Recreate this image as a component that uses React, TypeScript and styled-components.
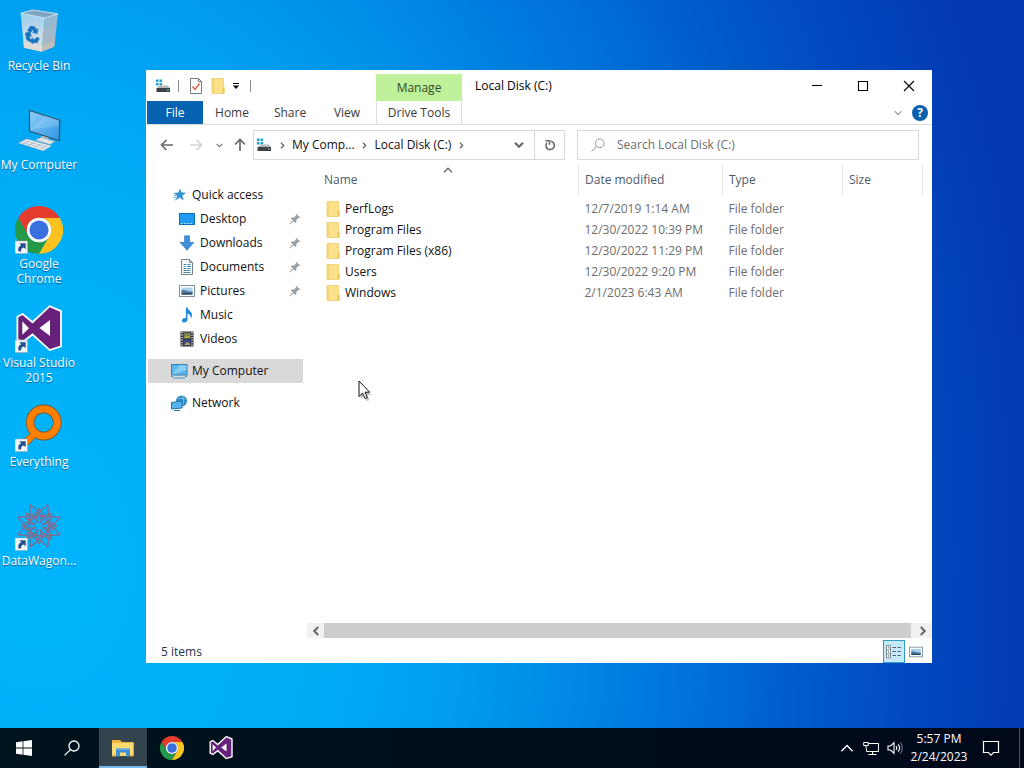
import React from "react";
import styled, { createGlobalStyle, css } from "styled-components";

const GlobalStyle = createGlobalStyle`
  *, *::before, *::after { box-sizing: border-box; }
  body {
    margin: 0;
    font-family: "Open Sans", "Noto Sans", sans-serif;
    font-size: 12px;
    line-height: 16px;
    color: #111;
  }
  button, input { font: inherit; color: inherit; }
  svg { display: block; flex: none; }
`;

const buttonReset = css`
  border: 0;
  padding: 0;
  margin: 0;
  background: none;
  display: flex;
  align-items: center;
  justify-content: center;
`;

/* ---------- Desktop ---------- */

const Screen = styled.div`
  min-height: 100vh;
  display: flex;
  flex-direction: column;
  background: radial-gradient(
    ellipse 98% 182% at 4% 73%,
    #00b5fd 0%,
    #00aef8 26%,
    #009df0 42%,
    #0091e8 49%,
    #0074dc 64%,
    #0058c8 78%,
    #0249c0 87%,
    #0238b0 100%
  );
`;

const Desktop = styled.main`
  flex: 1;
  position: relative;
  display: flex;
`;

const Shortcuts = styled.nav`
  width: 78px;
  padding: 8px 0;
  display: grid;
  grid-auto-rows: 99px;
  align-content: start;
`;

const Shortcut = styled.button`
  ${buttonReset}
  flex-direction: column;
  justify-content: flex-start;
  gap: 2px;
  color: #fff;
  line-height: 15px;
  text-shadow: 0 1px 1px rgba(0, 40, 90, 0.6);
`;

const ShortcutLabel = styled.span`
  max-width: 78px;
`;

/* ---------- Explorer window ---------- */

const Window = styled.section`
  position: absolute;
  top: 70px;
  right: 92px;
  bottom: 65px;
  left: 146px;
  padding: 0 0 0 1px;
  background: #fff;
  display: flex;
  flex-direction: column;
`;

const TitleBar = styled.header`
  height: 31px;
  display: flex;
  align-items: center;
`;

const QuickTools = styled.div`
  width: 229px;
  padding-left: 8px;
  display: flex;
  align-items: center;
`;

const ToolButton = styled.button<{ $width: number }>`
  ${buttonReset}
  width: ${(p) => p.$width}px;
  height: 22px;
`;

const Divider = styled.span`
  width: 1px;
  height: 12px;
  margin: 0 6px 0 7px;
  background: #8a8a8a;
`;

const ManageTab = styled.button`
  ${buttonReset}
  width: 86px;
  height: 27px;
  align-self: flex-end;
  background: #bff09a;
  color: #2f4a26;
`;

const Title = styled.h1`
  flex: 1;
  margin: 0 0 0 13px;
  font-size: 12px;
  font-weight: 400;
  color: #000;
`;

const CaptionButton = styled.button`
  ${buttonReset}
  width: 46px;
  height: 30px;
`;

const Ribbon = styled.div`
  height: 24px;
  display: flex;
  border-bottom: 1px solid #dcdddf;
`;

const RibbonTab = styled.button<{ $kind?: "file" | "context"; $width: number }>`
  ${buttonReset}
  width: ${(p) => p.$width}px;
  color: #3a3a3a;
  ${(p) =>
    p.$kind === "file" &&
    css`
      background: #0563b1;
      color: #fff;
    `}
  ${(p) =>
    p.$kind === "context" &&
    css`
      margin-left: 1px;
      border: solid #dcdddf;
      border-width: 0 1px;
    `}
`;

const RibbonEnd = styled.div`
  margin-left: auto;
  padding-right: 4px;
  display: flex;
  align-items: center;
  gap: 10px;
`;

const HelpButton = styled.button`
  ${buttonReset}
  width: 16px;
  height: 16px;
  border-radius: 50%;
  background: #0a62ad;
  color: #fff;
  font-weight: 700;
`;

const NavBar = styled.div`
  height: 40px;
  padding: 0 13px 0 7px;
  display: flex;
  align-items: center;
`;

const NavButton = styled.button<{ $width: number }>`
  ${buttonReset}
  width: ${(p) => p.$width}px;
  height: 28px;
`;

const AddressBar = styled.div`
  flex: 308 1 0;
  height: 30px;
  border: 1px solid #d9d9d9;
  display: flex;
  align-items: center;
  padding-left: 2px;
`;

const Crumb = styled.button`
  ${buttonReset}
  white-space: nowrap;
`;

const CrumbArrow = styled.span`
  width: 20px;
  display: flex;
  justify-content: center;
`;

const AddressEnd = styled.div`
  margin-left: auto;
  align-self: stretch;
  display: flex;
`;

const AddressButton = styled.button<{ $split?: boolean }>`
  ${buttonReset}
  width: 30px;
  border-left: ${(p) => (p.$split ? "1px solid #d9d9d9" : "0")};
`;

const SearchBox = styled.label`
  flex: 327 1 0;
  height: 30px;
  margin-left: 12px;
  padding-left: 13px;
  border: 1px solid #d9d9d9;
  display: flex;
  align-items: center;
  gap: 12px;
`;

const SearchInput = styled.input`
  flex: 1;
  min-width: 0;
  border: 0;
  padding: 0;
  outline: 0;
  background: none;
  &::placeholder { color: #6d6d6d; opacity: 1; }
`;

const Body = styled.div`
  flex: 1;
  min-height: 0;
  display: flex;
`;

const Sidebar = styled.nav`
  width: 160px;
  padding: 18px 4px 0 1px;
`;

const SideGroup = styled.ul`
  list-style: none;
  margin: 0 0 8px;
  padding: 0;
`;

const SideItem = styled.button<{ $child?: boolean; $selected?: boolean }>`
  ${buttonReset}
  justify-content: flex-start;
  width: 100%;
  height: 24px;
  padding-left: ${(p) => (p.$child ? 30 : 22)}px;
  padding-right: 2px;
  gap: 4px;
  background: ${(p) => (p.$selected ? "#d9d9d9" : "transparent")};
`;

const SideIcon = styled.span`
  width: 18px;
  display: flex;
  justify-content: center;
`;

const SideLabel = styled.span`
  flex: 1;
  text-align: left;
`;

const Content = styled.div`
  flex: 1;
  min-width: 0;
  display: flex;
  flex-direction: column;
`;

const FileArea = styled.div`
  flex: 1;
  padding-right: 9px;
`;

const FileTable = styled.table`
  width: 100%;
  table-layout: fixed;
  border-collapse: collapse;
`;

const HeadCell = styled.th<{ $width?: number }>`
  position: relative;
  width: ${(p) => (p.$width ? `${p.$width}px` : "auto")};
  height: 30px;
  padding: 0 0 0 ${(p) => (p.$width ? 6 : 17)}px;
  border-right: 1px solid #e5e5e5;
  text-align: left;
  font-weight: 400;
  color: #4c5a6c;
`;

const SortMark = styled.span`
  position: absolute;
  top: 0;
  left: 50%;
`;

const FileRows = styled.tbody`
  &::before {
    content: "";
    display: block;
    height: 3px;
  }
`;

const Cell = styled.td`
  height: 21px;
  padding: 0 0 0 6px;
  color: #6d6d6d;
  white-space: nowrap;
`;

const FileName = styled.span`
  padding-left: 13px;
  display: flex;
  align-items: center;
  gap: 4px;
  color: #111;
`;

const ScrollBar = styled.div`
  height: 15px;
  margin-bottom: 2px;
  padding-right: 1px;
  display: flex;
  background: #f1f1f1;
`;

const ScrollButton = styled.button`
  ${buttonReset}
  width: 17px;
`;

const ScrollThumb = styled.div`
  flex: 1;
  margin-right: 3px;
  background: #cdcdcd;
`;

const StatusBar = styled.footer`
  height: 23px;
  padding: 0 5px 0 14px;
  display: flex;
  align-items: center;
  color: #24344d;
`;

const ViewButton = styled.button<{ $active?: boolean; $first?: boolean }>`
  ${buttonReset}
  width: 22px;
  height: 23px;
  margin-left: ${(p) => (p.$first ? "auto" : "0")};
  border: ${(p) => (p.$active ? "1px solid #2f9fc4" : "0")};
  background: ${(p) => (p.$active ? "#c5e9f7" : "transparent")};
`;

const Cursor = styled.div`
  position: absolute;
  top: 380px;
  left: 358px;
  pointer-events: none;
`;

/* ---------- Taskbar ---------- */

const Taskbar = styled.footer`
  height: 40px;
  display: flex;
  background: linear-gradient(90deg, #00141d, #000d1c 60%, #00081a);
  color: #fff;
`;

const TaskGroup = styled.div<{ $gap: number }>`
  display: flex;
  gap: ${(p) => p.$gap}px;
  margin-right: 3px;
`;

const TaskButton = styled.button<{ $active?: boolean }>`
  ${buttonReset}
  width: 48px;
  height: 40px;
  background: ${(p) => (p.$active ? "#33444f" : "transparent")};
  box-shadow: ${(p) => (p.$active ? "inset 0 -2px #76b9ed" : "none")};
`;

const Tray = styled.div`
  margin-left: auto;
  display: flex;
`;

const TrayButton = styled.button<{ $width: number }>`
  ${buttonReset}
  width: ${(p) => p.$width}px;
`;

const Clock = styled.time`
  width: 64px;
  padding-top: 2px;
  text-align: center;
  line-height: 18px;
  display: flex;
  flex-direction: column;
`;

const ShowDesktop = styled.button`
  ${buttonReset}
  width: 5px;
  margin-left: 8px;
  border-left: 1px solid #4a5564;
`;

/* ---------- Drawings ---------- */

const ShortcutArrow = () => (
  <g>
    <rect x="0" y="35" width="12.500" height="12.500" fill="#f4f6f8" stroke="#9aa7b5" strokeWidth=".6" />
    <path d="M3.500 45.500c-.8-3 .2-5.300 2.600-6.200L4.500 37.300h6.200v6l-1.900-1.900c-2.200.4-3 1.900-2.600 4.100z" fill="#23508f" />
  </g>
);

const RecycleBinIcon = () => (
  <svg width="48" height="48" viewBox="0 0 48 48">
    <defs>
      <linearGradient id="binL" x1="0" x2="0" y1="0" y2="1">
        <stop offset="0" stopColor="#9fcfee" /><stop offset=".6" stopColor="#c9dbe6" /><stop offset="1" stopColor="#dedbd8" />
      </linearGradient>
      <linearGradient id="binR" x1="0" x2="0" y1="0" y2="1">
        <stop offset="0" stopColor="#8fb9d6" /><stop offset="1" stopColor="#b3b7ba" />
      </linearGradient>
    </defs>
    <path d="M5.700 5.300 30 10l-3.300 33.700L9 39.700z" fill="url(#binL)" />
    <path d="M30 10 43 5.800l-3.700 33-12.600 4.900z" fill="url(#binR)" />
    <path d="M5.700 5.300 17.700 2 43 5.800 30 10z" fill="#7fa6be" stroke="#d3e6f1" strokeWidth=".9" />
    <path d="m9 39.700-.8-6.500 19.200 4.500-.7 6z" fill="#e3dcd4" opacity=".7" />
    <path d="m27.400 37.700 12.400-4.500-.5 5.600-12.600 4.900z" fill="#c9bfb5" opacity=".7" />
    <g fill="#1673c4" stroke="#1673c4" strokeWidth=".6">
      <path d="m12.500 22.500 3-4.500 4 .8 2 2.800 1.400-.8-.9 5-4.400-1.600 1.400-.8-1.400-1.800-2.200 3.300z" />
      <path d="m10.500 25 4-.8 2 4-1.500-.5-.6 1.800 1.400 2.800-1.500 1.500-2.800-2.500z" />
      <path d="m17.600 31 2.600.6 1.200-2.300 2.900 1-2 4.200-4.700.3v1.200l-3-3.300 3-2.800z" />
    </g>
  </svg>
);

const ComputerIcon = () => (
  <svg width="48" height="48" viewBox="0 0 48 48">
    <defs>
      <linearGradient id="scr" x1="0" y1="0" x2="1" y2="1">
        <stop offset="0" stopColor="#8fd0f8" /><stop offset=".5" stopColor="#5cb2ee" /><stop offset="1" stopColor="#2f96e4" />
      </linearGradient>
    </defs>
    <path d="m27 28 7 2-1 4-8-2z" fill="#b9c2c8" />
    <path d="m20 33 6-2.500 14 4-5 3z" fill="#dfe4e8" stroke="#8fa3b0" strokeWidth=".5" />
    <path d="m14.500 3.500 30.300 9.800-.5 20.500L14.500 24z" fill="url(#scr)" stroke="#33556e" strokeWidth="1.200" />
    <path d="m15.500 22.500 15-14 13 4.500v6z" fill="#fff" opacity=".15" />
    <path d="m3.300 36 8.400-4.200 25 6.900-8.400 5.300z" fill="#e6ecf0" stroke="#7d98ab" strokeWidth=".5" />
    <path d="m7 35.500 22.500 6M10 34l22.500 6M14 33.500 7.500 37M20 35l-7 3.800M26 36.800l-6.500 4M32 38.500l-6 3.500" stroke="#9db0bd" strokeWidth=".6" fill="none" />
  </svg>
);

const ChromeShape = () => (
  <g>
    <path d="M3.200 12A24 24 0 0 1 44.800 12H24A12 12 0 0 0 13.600 30z" fill="#e33b2e" />
    <path d="M3.200 12 13.600 30a12 12 0 0 0 20.800 0L24 48A24 24 0 0 1 3.200 12z" fill="#249a48" />
    <path d="M44.800 12A24 24 0 0 1 24 48l10.400-18A12 12 0 0 0 24 12z" fill="#fcc31e" />
    <circle cx="24" cy="24" r="12.200" fill="#fff" />
    <circle cx="24" cy="24" r="9.600" fill="#3a6fe0" />
  </g>
);

const ChromeIcon = ({ size, linked }: { size: number; linked?: boolean }) => (
  <svg width={size} height={size} viewBox="0 0 48 48">
    <ChromeShape />
    {linked && <ShortcutArrow />}
  </svg>
);

const StudioIcon = ({ size, linked }: { size: number; linked?: boolean }) => (
  <svg width={size} height={size} viewBox="0 0 48 48">
    <path
      d="M2.400 11.700 7.700 9l9.800 8.200L34.700 1.200l11.300 4.900v35.200l-11.300 3.800L17.500 29.500 7.700 37l-5.300-2.700z"
      fill="#68217a"
      stroke="#fff"
      strokeWidth={linked ? 1.8 : 2.8}
    />
    <path d="M7.300 16.300v13.500l6.700-6.600zM35 15v16l-10.500-8z" fill="#fff" />
    {linked && <ShortcutArrow />}
  </svg>
);

const EverythingIcon = () => (
  <svg width="48" height="48" viewBox="0 0 48 48">
    <path d="m16 29-9 8 4 6 9.500-9.500z" fill="#ff8000" stroke="#7b5a34" />
    <circle cx="28.700" cy="18.500" r="13.600" fill="none" stroke="#7b5a34" strokeWidth="8.600" />
    <circle cx="28.700" cy="18.500" r="13.600" fill="none" stroke="#ff8000" strokeWidth="6.800" />
    <path d="m17 28.500-5 4.500 4 4 5.500-5z" fill="#ff8000" />
    <ShortcutArrow />
  </svg>
);

const WagonIcon = () => (
  <svg width="48" height="48" viewBox="0 0 48 48">
    <g fill="none" strokeWidth="1">
      {[0, 45, 90, 135].map((a) => (
        <g key={a} transform={`rotate(${a} 24 23)`}>
          <path d="M15 2v16L24 11l9 7V2l-9 7zM15 44V28l9 7 9-7v16l-9-7z" stroke="#7c6c98" />
          <path d="m24 5 5 10-5 6-5-6zM24 41l5-10-5-6-5 6z" stroke="#a8606c" />
          <path d="M17 10 31 36M31 10 17 36" stroke="#6d74a2" />
        </g>
      ))}
    </g>
    <circle cx="24" cy="23" r="3.500" fill="#08b4f6" />
    <ShortcutArrow />
  </svg>
);

const DriveIcon = () => (
  <svg width="16" height="16" viewBox="0 0 16 16">
    <path d="M1 1.500h2.500V4H1zM4.500 1.500H7V4H4.500zM1 5h2.500v2.500H1zM4.500 5H7v2.500H4.500z" fill="#18a4d8" />
    <path d="m3.500 8.500 1-1h8.500l2 2.500h-13z" fill="#b6babd" />
    <path d="M1.500 10h13.500v4h-13.500z" fill="#3d4246" />
    <path d="M12 12h2" stroke="#57d08a" />
  </svg>
);

const PropertiesIcon = () => (
  <svg width="14" height="16" viewBox="0 0 14 16">
    <path d="M1.500.5h8l3 3v12h-11z" fill="#fbfbfb" stroke="#7c7c7c" />
    <path d="M9.500.5v3h3" fill="none" stroke="#7c7c7c" />
    <path d="m3.500 8.500 2.500 3 4.500-6" fill="none" stroke="#dc5a40" strokeWidth="1.300" />
  </svg>
);

const FolderIcon = () => (
  <svg width="15" height="16" viewBox="0 0 15 16">
    <path d="M1 .5h11.500v15H1z" fill="#fbe28a" stroke="#edcd68" strokeWidth=".8" />
    <path d="M1 .5h2v15H1z" fill="#f3d372" />
    <path d="m11.500 10 2.200-1v6.500h-2.200z" fill="#ecc95a" />
  </svg>
);

const Chevron = ({ dir, color = "#666", size = 8, weight = 1.4 }: { dir: "up" | "down" | "left" | "right"; color?: string; size?: number; weight?: number }) => {
  const turn = { down: 0, left: 90, up: 180, right: 270 }[dir];
  return (
    <svg width={size} height={size} viewBox="0 0 8 8">
      <path d="m.8 2.200 3.200 3.200 3.200-3.200" transform={`rotate(${turn} 4 4)`} fill="none" stroke={color} strokeWidth={weight} />
    </svg>
  );
};

const Arrow = ({ turn = 0, color = "#6a6a6a" }: { turn?: number; color?: string }) => (
  <svg width="14" height="14" viewBox="0 0 14 14">
    <path d="M13 7H2M6.500 2 1.500 7l5 5" transform={`rotate(${turn} 7 7)`} fill="none" stroke={color} strokeWidth="1.700" />
  </svg>
);

const Magnifier = ({ size, color, weight }: { size: number; color: string; weight: number }) => (
  <svg width={size} height={size} viewBox="0 0 16 16">
    <circle cx="10" cy="6" r="5" fill="none" stroke={color} strokeWidth={weight} />
    <path d="M6.400 9.600.6 15.400" stroke={color} strokeWidth={weight} />
  </svg>
);

const PinIcon = () => (
  <svg width="12" height="12" viewBox="0 0 12 12">
    <path d="m7.200.8 4 4-1 .4-.9-.2-2 2 .1 2.200-1 .9L4.600 8.200 1 11.400l-.5-.5 3.200-3.600L1.900 5.500l.9-1 2.200.1 2-2-.2-.9z" fill="#9aa0a5" />
  </svg>
);

const StarIcon = () => (
  <svg width="14" height="14" viewBox="0 0 16 16">
    <path d="m9.200 1.500 1.300 4 4.700.2-3.700 2.800 1.300 5-4-2.800-3.800 2.400 1.200-4.400L2.600 6l4.600-.4z" fill="#2f96d8" stroke="#1f78b8" strokeWidth=".6" />
    <path d="M2 8.500h3M1.500 11h3M3 13.500h2" stroke="#4aa9e4" />
  </svg>
);

const DesktopIcon = () => (
  <svg width="16" height="16" viewBox="0 0 16 16">
    <rect x=".5" y="2.500" width="15" height="11" fill="#1e9bf0" stroke="#0e6fb8" />
    <path d="M2 12.500h12" stroke="#9ad6fb" strokeDasharray="2 1" />
  </svg>
);

const DownloadIcon = () => (
  <svg width="16" height="16" viewBox="0 0 16 16">
    <path d="M5.500.8h5v6.500H15L8 15.300 1 7.300h4.500z" fill="#3c8fd8" stroke="#2a74b8" strokeWidth=".6" />
  </svg>
);

const DocumentIcon = () => (
  <svg width="16" height="16" viewBox="0 0 16 16">
    <path d="M2.500.5h8l3 3v12h-11z" fill="#fcfdfe" stroke="#75848f" />
    <path d="M10.500.5v3h3" fill="none" stroke="#75848f" />
    <path d="M4.500 5.500h3M8.500 5.500h3M4.500 7.500h2M8 7.500h4M4.500 9.500h3M8.500 9.500h3M4.500 11.500h7M4.500 13.500h7" stroke="#3f88a8" />
  </svg>
);

const PictureIcon = ({ size = 16 }: { size?: number }) => (
  <svg width={size} height={size} viewBox="0 0 16 16">
    <rect x=".5" y="2.500" width="15" height="11" fill="#fff" stroke="#7d93a5" />
    <path d="M2.500 4.500h11v7h-11z" fill="#a9d1ee" />
    <path d="M2.500 7.500c3-1.500 5 1.500 11 1v3h-11z" fill="#4a7ca3" />
    <path d="M2.500 10.500c3-1 6-.5 11 0v1h-11z" fill="#23415a" />
  </svg>
);

const MusicIcon = () => (
  <svg width="16" height="16" viewBox="0 0 16 16">
    <path d="M7 .5h1.500c.3 3 4.500 4 4.500 7.500 0 1.500-.6 2.600-1.500 3.500.5-2.500-.5-4.500-3-5v6c0 2-1.500 3-3.200 3C3.800 15.500 3 14.500 3 13.400c0-1.600 1.800-2.700 4-2.300z" fill="#1b8be0" />
  </svg>
);

const VideoIcon = () => (
  <svg width="16" height="16" viewBox="0 0 16 16">
    <rect x="1.500" y=".5" width="13" height="15" fill="#2c2c2e" />
    <path d="M3 1v14M13 1v14" stroke="#e8e8e8" strokeWidth="1.400" strokeDasharray="1.200 1.300" />
    <rect x="4.500" y="1.500" width="7" height="6" fill="#6f7d52" />
    <rect x="4.500" y="8.500" width="7" height="6" fill="#3d4c8c" />
    <path d="m5 7 2-3 2 2 2-3v4zM5 14l3-3 3 2v1z" fill="#b9a64a" />
  </svg>
);

const MonitorIcon = () => (
  <svg width="18" height="16" viewBox="0 0 18 16">
    <rect x="1.500" y="1.500" width="15.500" height="10.500" fill="#5cb6ec" stroke="#2e7fb4" />
    <path d="m2 11.500 8-9.500h6.500v5z" fill="#9ad8fa" opacity=".7" />
    <path d="M3 15h12M1 13.500h2M15 13.500h2" stroke="#4b97c4" />
  </svg>
);

const NetworkPlaceIcon = () => (
  <svg width="18" height="16" viewBox="0 0 18 16">
    <circle cx="11.500" cy="6" r="5.500" fill="#2e8cc8" />
    <path d="M8 3c2 1 5 0 7 1M12 .5c2 3 2 7 0 11" stroke="#8accf0" fill="none" strokeWidth=".8" />
    <path d="m1.500 7.500 10.500-1.500v7l-10.500 1z" fill="#56b4ea" stroke="#2473a6" />
    <path d="M4 15.500h6" stroke="#2473a6" />
  </svg>
);

const RefreshIcon = () => (
  <svg width="12" height="12" viewBox="0 0 12 12">
    <path d="M6.800 2.300A4.200 4.200 0 1 1 2.900 3.800" fill="none" stroke="#6b6b6b" strokeWidth="1.600" />
    <path d="M1.500 1.800h4v4" fill="none" stroke="#6b6b6b" strokeWidth="1.600" />
  </svg>
);

const CaretMenuIcon = () => (
  <svg width="8" height="8" viewBox="0 0 8 8">
    <path d="M1 1.500h6" stroke="#000" />
    <path d="M.8 3.500h6.400L4 7z" fill="#000" />
  </svg>
);

const DetailsIcon = () => (
  <svg width="16" height="14" viewBox="0 0 16 14">
    <path d="M.5.500h4v12.500h-4zM.5 4.700h4M.5 8.900h4" fill="#fff" stroke="#7f8c96" />
    <path d="M2 2.700h1M2 6.800h1M2 11h1" stroke="#333" />
    <path d="M6.500 2.500h3.500M11.500 2.500H15M6.500 6.500h3.500M11.500 6.500H15M6.500 10.500h3.500M11.500 10.500H15" stroke="#56646f" />
  </svg>
);

const WindowsIcon = () => (
  <svg width="16" height="16" viewBox="0 0 16 16">
    <path d="M0 2.200 6.600 1.300v6.300H0zM7.400 1.200 16 0v7.600H7.400zM0 8.400h6.600v6.300L0 13.800zM7.400 8.400H16V16l-8.600-1.200z" fill="#fff" />
  </svg>
);

const ExplorerIcon = () => (
  <svg width="22" height="18" viewBox="0 0 22 18">
    <path d="M0 1h8l2 2h11.500v14H0z" fill="#f0b73c" />
    <path d="M0 4h21.500v13H0z" fill="#fddb70" />
    <path d="M4 9.500h14V17.500h-4v-4H8v4H4z" fill="#3f8fd2" />
    <path d="M4 9.500h14v1.500H4z" fill="#66b0e8" />
    <path d="M0 16h4v1.500H0zM18 16h3.500v1.500H18z" fill="#e9ae36" />
  </svg>
);

const TrayNetworkIcon = () => (
  <svg width="17" height="15" viewBox="0 0 17 15">
    <path d="M5.300 2.500h10.200v8H3.500V7.500M9.500 10.500v3M5.500 13.500h8" fill="none" stroke="#fff" />
    <path d="M.7 1.500h4.600v3H.7zM3 4.500V7.500" fill="none" stroke="#fff" />
  </svg>
);

const SpeakerIcon = () => (
  <svg width="17" height="14" viewBox="0 0 17 14">
    <path d="M1 5h2.500L7 1.800v10.400L3.500 9H1z" fill="none" stroke="#fff" strokeWidth="1.100" />
    <path d="M9 5c1 1.200 1 2.800 0 4M11 3.300c2 2.200 2 5.200 0 7.400" fill="none" stroke="#fff" strokeWidth="1.100" />
    <path d="M13.200 1.500c2.800 3.200 2.800 7.800 0 11" fill="none" stroke="#76808c" strokeWidth="1.100" />
  </svg>
);

const NotificationIcon = () => (
  <svg width="18" height="18" viewBox="0 0 18 18">
    <path d="M1.500 2.500h15v11h-5L9 16.200l-2.500-2.700h-5z" fill="none" stroke="#fff" strokeWidth="1.200" />
  </svg>
);

const CaptionIcon = ({ d }: { d: string }) => (
  <svg width="12" height="12" viewBox="0 0 12 12">
    <path d={d} fill="none" stroke="#000" strokeWidth="1.100" />
  </svg>
);

/* ---------- Data ---------- */

const shortcuts = [
  { label: "Recycle Bin", icon: <RecycleBinIcon /> },
  { label: "My Computer", icon: <ComputerIcon /> },
  { label: "Google Chrome", icon: <ChromeIcon size={48} linked /> },
  { label: "Visual Studio 2015", icon: <StudioIcon size={48} linked /> },
  { label: "Everything", icon: <EverythingIcon /> },
  { label: "DataWagon...", icon: <WagonIcon /> },
];

const places = [
  [
    { label: "Quick access", icon: <StarIcon /> },
    { label: "Desktop", icon: <DesktopIcon />, child: true, pinned: true },
    { label: "Downloads", icon: <DownloadIcon />, child: true, pinned: true },
    { label: "Documents", icon: <DocumentIcon />, child: true, pinned: true },
    { label: "Pictures", icon: <PictureIcon />, child: true, pinned: true },
    { label: "Music", icon: <MusicIcon />, child: true },
    { label: "Videos", icon: <VideoIcon />, child: true },
  ],
  [{ label: "My Computer", icon: <MonitorIcon />, selected: true }],
  [{ label: "Network", icon: <NetworkPlaceIcon /> }],
] as { label: string; icon: React.ReactNode; child?: boolean; pinned?: boolean; selected?: boolean }[][];

const files = [
  ["PerfLogs", "12/7/2019 1:14 AM"],
  ["Program Files", "12/30/2022 10:39 PM"],
  ["Program Files (x86)", "12/30/2022 11:29 PM"],
  ["Users", "12/30/2022 9:20 PM"],
  ["Windows", "2/1/2023 6:43 AM"],
];

/* ---------- Page ---------- */

const Explorer = () => (
  <Window aria-label="Local Disk (C:)">
    <TitleBar>
      <QuickTools>
        <ToolButton $width={16} aria-label="Drive"><DriveIcon /></ToolButton>
        <Divider />
        <ToolButton $width={22} aria-label="Properties"><PropertiesIcon /></ToolButton>
        <ToolButton $width={22} aria-label="New folder"><FolderIcon /></ToolButton>
        <ToolButton $width={14} aria-label="Customize toolbar"><CaretMenuIcon /></ToolButton>
        <Divider />
      </QuickTools>
      <ManageTab>Manage</ManageTab>
      <Title>Local Disk (C:)</Title>
      <CaptionButton aria-label="Minimize"><CaptionIcon d="M1 5.500h10" /></CaptionButton>
      <CaptionButton aria-label="Maximize"><CaptionIcon d="M1.500 1.500h9v9h-9z" /></CaptionButton>
      <CaptionButton aria-label="Close"><CaptionIcon d="m1 1 10 10M11 1 1 11" /></CaptionButton>
    </TitleBar>

    <Ribbon>
      <RibbonTab $kind="file" $width={56}>File</RibbonTab>
      <RibbonTab $width={58}>Home</RibbonTab>
      <RibbonTab $width={58}>Share</RibbonTab>
      <RibbonTab $width={56}>View</RibbonTab>
      <RibbonTab $kind="context" $width={86}>Drive Tools</RibbonTab>
      <RibbonEnd>
        <Chevron dir="down" color="#a5a5a5" />
        <HelpButton aria-label="Help">?</HelpButton>
      </RibbonEnd>
    </Ribbon>

    <NavBar>
      <NavButton $width={25} aria-label="Back"><Arrow /></NavButton>
      <NavButton $width={33} aria-label="Forward"><Arrow turn={180} color="#d2d2d2" /></NavButton>
      <NavButton $width={15} aria-label="Recent locations"><Chevron dir="down" color="#777" size={7} /></NavButton>
      <NavButton $width={26} aria-label="Up"><Arrow turn={90} /></NavButton>
      <AddressBar>
        <DriveIcon />
        <CrumbArrow><Chevron dir="right" size={7} /></CrumbArrow>
        <Crumb>My Comp...</Crumb>
        <CrumbArrow><Chevron dir="right" size={7} /></CrumbArrow>
        <Crumb>Local Disk (C:)</Crumb>
        <CrumbArrow><Chevron dir="right" size={7} /></CrumbArrow>
        <AddressEnd>
          <AddressButton aria-label="Previous locations"><Chevron dir="down" size={10} weight={1.7} /></AddressButton>
          <AddressButton $split aria-label="Refresh"><RefreshIcon /></AddressButton>
        </AddressEnd>
      </AddressBar>
      <SearchBox>
        <Magnifier size={14} color="#8a8a8a" weight={1} />
        <SearchInput type="text" aria-label="Search" placeholder="Search Local Disk (C:)" />
      </SearchBox>
    </NavBar>

    <Body>
      <Sidebar aria-label="Places">
        {places.map((group) => (
          <SideGroup key={group[0].label}>
            {group.map((p) => (
              <li key={p.label}>
                <SideItem $child={p.child} $selected={p.selected}>
                  <SideIcon>{p.icon}</SideIcon>
                  <SideLabel>{p.label}</SideLabel>
                  {p.pinned && <PinIcon />}
                </SideItem>
              </li>
            ))}
          </SideGroup>
        ))}
      </Sidebar>

      <Content>
        <FileArea>
          <FileTable>
            <thead>
              <tr>
                <HeadCell>
                  Name
                  <SortMark><Chevron dir="up" size={10} weight={1} /></SortMark>
                </HeadCell>
                <HeadCell $width={144}>Date modified</HeadCell>
                <HeadCell $width={120}>Type</HeadCell>
                <HeadCell $width={80}>Size</HeadCell>
              </tr>
            </thead>
            <FileRows>
              {files.map(([name, date]) => (
                <tr key={name}>
                  <Cell><FileName><FolderIcon />{name}</FileName></Cell>
                  <Cell>{date}</Cell>
                  <Cell>File folder</Cell>
                  <Cell />
                </tr>
              ))}
            </FileRows>
          </FileTable>
        </FileArea>
        <ScrollBar>
          <ScrollButton aria-label="Scroll left"><Chevron dir="left" size={10} weight={1.6} /></ScrollButton>
          <ScrollThumb />
          <ScrollButton aria-label="Scroll right"><Chevron dir="right" size={10} weight={1.6} /></ScrollButton>
        </ScrollBar>
      </Content>
    </Body>

    <StatusBar>
      5 items
      <ViewButton $first $active aria-label="Details view"><DetailsIcon /></ViewButton>
      <ViewButton aria-label="Thumbnail view"><PictureIcon size={14} /></ViewButton>
    </StatusBar>
  </Window>
);

export default function App() {
  return (
    <Screen>
      <GlobalStyle />
      <Desktop>
        <Shortcuts aria-label="Desktop shortcuts">
          {shortcuts.map((s) => (
            <Shortcut key={s.label}>
              {s.icon}
              <ShortcutLabel>{s.label}</ShortcutLabel>
            </Shortcut>
          ))}
        </Shortcuts>
        <Explorer />
        <Cursor>
          <svg width="14" height="22" viewBox="0 0 14 22">
            <path d="M2.500 3v16l3.500-3 2.500 5 3-1-2.500-5h4z" fill="#000" opacity=".25" />
            <path d="M1 1v15.500l3.600-3.400 2.400 5.400 2.400-1-2.400-5.300h4.700z" fill="#fff" stroke="#111" />
          </svg>
        </Cursor>
      </Desktop>

      <Taskbar>
        <TaskGroup $gap={0}>
          <TaskButton aria-label="Start"><WindowsIcon /></TaskButton>
          <TaskButton aria-label="Search"><Magnifier size={16} color="#fff" weight={1.3} /></TaskButton>
        </TaskGroup>
        <TaskGroup $gap={1}>
          <TaskButton $active aria-label="File Explorer"><ExplorerIcon /></TaskButton>
          <TaskButton aria-label="Google Chrome"><ChromeIcon size={24} /></TaskButton>
          <TaskButton aria-label="Visual Studio"><StudioIcon size={24} /></TaskButton>
        </TaskGroup>
        <Tray>
          <TrayButton $width={24} aria-label="Show hidden icons"><Chevron dir="up" color="#fff" size={14} weight={0.8} /></TrayButton>
          <TrayButton $width={24} aria-label="Network"><TrayNetworkIcon /></TrayButton>
          <TrayButton $width={24} aria-label="Volume"><SpeakerIcon /></TrayButton>
          <Clock>
            <span>5:57 PM</span>
            <span>2/24/2023</span>
          </Clock>
          <TrayButton $width={40} aria-label="Notifications"><NotificationIcon /></TrayButton>
          <ShowDesktop aria-label="Show desktop" />
        </Tray>
      </Taskbar>
    </Screen>
  );
}
